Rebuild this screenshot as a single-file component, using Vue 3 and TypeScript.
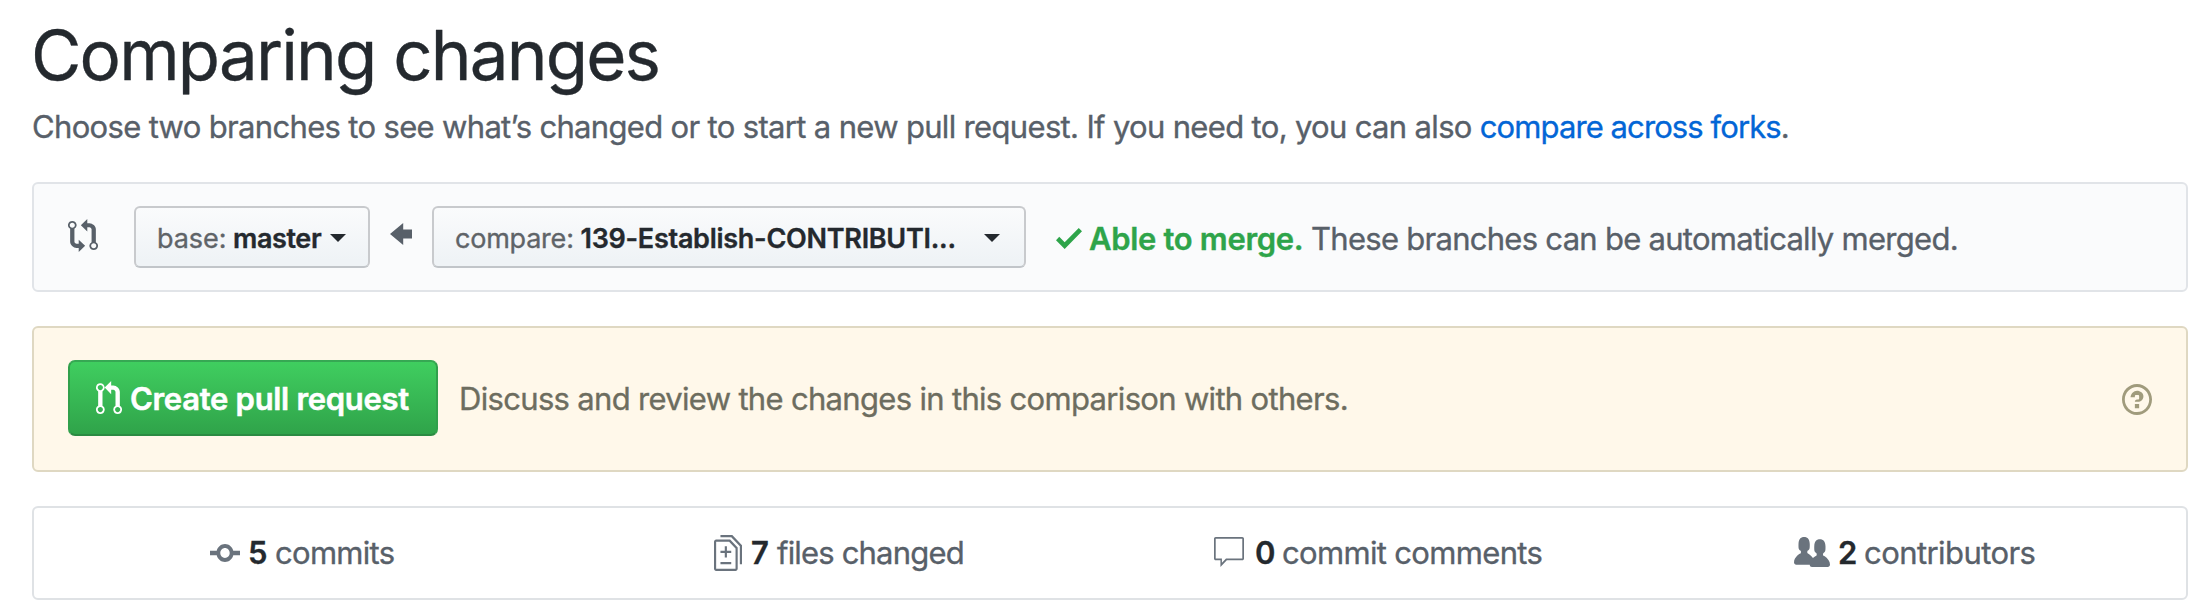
<script setup lang="ts">
interface Stat {
  key: string
  count: string
  label: string
  viewBox: string
  w: number
  h: number
  path: string
}

const prPath =
  'M11 11.28V5c-.03-.78-.34-1.47-.94-2.06C9.46 2.35 8.78 2.03 8 2H7V0L4 3l3 3V4h1c.27.02.48.11.69.31.21.2.3.42.31.69v6.28A1.993 1.993 0 0010 15a1.993 1.993 0 001-3.72zm-1 2.92c-.66 0-1.2-.55-1.2-1.2 0-.65.55-1.2 1.2-1.2.65 0 1.2.55 1.2 1.2 0 .65-.55 1.2-1.2 1.2zM4 3c0-1.11-.89-2-2-2a1.993 1.993 0 00-1 3.72v6.56A1.993 1.993 0 002 15a1.993 1.993 0 001-3.72V4.72c.59-.34 1-.98 1-1.72zm-.8 10c0 .66-.55 1.2-1.2 1.2-.65 0-1.2-.55-1.2-1.2 0-.65.55-1.2 1.2-1.2.65 0 1.2.55 1.2 1.2zM2 4.2C1.34 4.2.8 3.65.8 3c0-.65.55-1.2 1.2-1.2.65 0 1.2.55 1.2 1.2 0 .65-.55 1.2-1.2 1.2z'

const stats: Stat[] = [
  {
    key: 'commits', count: '5', label: 'commits', viewBox: '0 4 14 8', w: 30, h: 18,
    path: 'M10.86 7c-.45-1.72-2-3-3.86-3-1.86 0-3.41 1.28-3.86 3H0v2h3.14c.45 1.72 2 3 3.86 3 1.86 0 3.41-1.28 3.86-3H14V7h-3.14zM7 10.2c-1.22 0-2.2-.98-2.2-2.2 0-1.22.98-2.2 2.2-2.2 1.22 0 2.2.98 2.2 2.2 0 1.22-.98 2.2-2.2 2.2z',
  },
  {
    key: 'files', count: '7', label: 'files changed', viewBox: '0 0 13 16', w: 28, h: 36,
    path: 'M6 7h2v1H6v2H5V8H3V7h2V5h1v2zm-3 6h5v-1H3v1zM7.5 2L11 5.5V15c0 .55-.45 1-1 1H1c-.55 0-1-.45-1-1V3c0-.55.45-1 1-1h6.5zM10 6L7 3H1v12h9V6zM8.5 0H3v1h5l4 4v8h1V4.5L8.5 0z',
  },
  {
    key: 'comments', count: '0', label: 'commit comments', viewBox: '1 1 14 13.5', w: 30, h: 30,
    path: 'M14.2 1H1.8c-.44 0-.8.36-.8.8v8.9c0 .44.36.8.8.8H4v3l3-3h7.2c.44 0 .8-.36.8-.8V1.8c0-.44-.36-.8-.8-.8zm0 9.700H6.6l-1.9 1.9v-1.9H1.8V1.8h12.4v8.9z',
  },
  {
    key: 'contributors', count: '2', label: 'contributors', viewBox: '0 1 16 13', w: 36, h: 30,
    path: 'M16 12.999c0 .439-.45 1-1 1H7.995c-.539 0-.994-.447-.995-.999H1c-.54 0-1-.561-1-1 0-2.634 3-4 3-4s.229-.409 0-1c-.841-.621-1.058-.59-1-3 .058-2.419 1.367-3 2.5-3s2.442.58 2.5 3c.058 2.41-.159 2.379-1 3-.229.59 0 1 0 1s1.549.711 2.42 2.088C9.196 9.369 10 8.999 10 8.999s.229-.409 0-1c-.841-.62-1.058-.59-1-3 .058-2.419 1.367-3 2.5-3s2.437.581 2.495 3c.059 2.41-.158 2.38-1 3-.229.59 0 1 0 1s3.005 1.366 3.005 4z',
  },
]
</script>

<template>
  <main class="page">
    <h1 class="title">Comparing changes</h1>
    <p class="subtitle">Choose two branches to see what’s changed or to start a new pull request. If you need to, you can also <a class="link">compare across forks</a>.</p>

    <section class="range">
      <svg class="compare-icon" viewBox="0 0 14 16" preserveAspectRatio="none">
        <path fill-rule="evenodd" d="M5 12H4c-.27-.02-.48-.11-.69-.31-.21-.2-.3-.42-.31-.69V4.72A1.993 1.993 0 002 1a1.993 1.993 0 00-1 3.72V11c.03.78.34 1.47.94 2.06.6.59 1.28.91 2.06.94h1v2l3-3-3-3v2zM2 1.8c.66 0 1.2.55 1.2 1.2 0 .65-.55 1.2-1.2 1.2C1.35 4.2.8 3.65.8 3c0-.65.55-1.2 1.2-1.2zm11 9.48V5c-.03-.78-.34-1.47-.94-2.06-.6-.59-1.28-.91-2.06-.94H9V0L6 3l3 3V4h1c.27.02.48.11.69.31.21.2.3.42.31.69v6.28A1.993 1.993 0 0012 15a1.993 1.993 0 001-3.72zm-1 2.92c-.66 0-1.2-.55-1.2-1.2 0-.65.55-1.2 1.2-1.2.65 0 1.2.55 1.2 1.2 0 .65-.55 1.2-1.2 1.2z" />
      </svg>
      <button class="select base"><span class="key">base:</span><b class="branch">master</b><i class="caret"></i></button>
      <svg class="arrow-icon" viewBox="0 3 10 10" preserveAspectRatio="none"><path d="M6 3L0 8l6 5v-3h4V6H6V3z" /></svg>
      <button class="select head"><span class="key">compare:</span><b class="branch">139-Establish-CONTRIBUTI...</b><i class="caret"></i></button>
      <svg class="check-icon" viewBox="0 3.5 12 9.5" preserveAspectRatio="none"><path d="M12 5l-8 8-4-4 1.500-1.500L4 10l6.500-6.500L12 5z" /></svg>
      <strong class="able">Able to merge.</strong>
      <span class="detail">These branches can be automatically merged.</span>
    </section>

    <section class="prompt">
      <button class="create">
        <svg class="pr-icon" viewBox="0 0 12 15" preserveAspectRatio="none"><path fill-rule="evenodd" :d="prPath" /></svg>
        <span>Create pull request</span>
      </button>
      <span class="discuss">Discuss and review the changes in this comparison with others.</span>
      <svg class="help-icon" viewBox="0 1 14 14" preserveAspectRatio="none">
        <path fill-rule="evenodd" d="M6 10h2v2H6v-2zm4-3.5C10 8.64 8 9 8 9H6c0-.55.45-1 1-1h.5c.28 0 .5-.22.5-.5v-1c0-.28-.22-.5-.5-.5h-1c-.28 0-.5.22-.5.5V7H4c0-1.5 1.5-3 3-3s3 1 3 2.5zM7 2.3c3.14 0 5.7 2.56 5.7 5.7s-2.56 5.7-5.7 5.7A5.71 5.71 0 011.3 8c0-3.14 2.56-5.7 5.7-5.7zM7 1C3.14 1 0 4.14 0 8s3.14 7 7 7 7-3.14 7-7-3.14-7-7-7z" />
      </svg>
    </section>

    <section class="stats">
      <div v-for="s in stats" :key="s.key" class="cell">
        <div class="stat" :class="s.key">
          <span class="glyph">
            <svg :width="s.w" :height="s.h" :viewBox="s.viewBox" preserveAspectRatio="none"><path fill-rule="evenodd" :d="s.path" /></svg>
          </span>
          <b class="count">{{ s.count }}</b>
          <span class="label">{{ s.label }}</span>
        </div>
      </div>
    </section>
  </main>
</template>

<style>
body { margin: 0; background: #fff; }
</style>

<style scoped>
.page {
  box-sizing: border-box;
  width: 2202px;
  height: 616px;
  padding: 15px 14px 0 32px;
  overflow: hidden;
  font: 400 31px/40px Inter, "Liberation Sans", sans-serif;
  color: #586069;
  letter-spacing: -0.665px;
  white-space: nowrap;
  -webkit-text-stroke: 0.35px currentColor;
}
svg { display: block; fill: currentColor; flex: none; }
.title {
  margin: 0 0 0 -1px;
  height: 80px;
  font-size: 69px;
  font-weight: 400;
  line-height: 80px;
  letter-spacing: -1.8px;
  color: #24292e;
}
.subtitle { margin: 12px 0 35px; height: 40px; }
.link { color: #0366d6; letter-spacing: -0.91px; }
section {
  box-sizing: border-box;
  display: flex;
  align-items: center;
  width: 2156px;
  border: 2px solid #e1e4e8;
  border-radius: 6px;
}
.range { height: 110px; padding-left: 34px; background: #fafbfc; }
.compare-icon { width: 30px; height: 33px; margin-bottom: 4px; }
.select {
  box-sizing: border-box;
  display: flex;
  align-items: center;
  flex: none;
  height: 62px;
  padding: 3px 0 0 21px;
  border: 2px solid #c8cacd;
  border-bottom-color: #c1c5c9;
  border-radius: 6px;
  background: linear-gradient(#fafbfc, #eff3f6 90%);
  font: 400 27px/36px Inter, "Liberation Sans", sans-serif;
  color: #24292e;
}
.key { color: #5f6468; text-align: left; }
.branch { font-weight: 600; text-align: left; }
.caret {
  width: 0;
  height: 0;
  margin-bottom: 1px;
  border: 8px solid transparent;
  border-top-color: currentColor;
  border-bottom: 0;
}
.base { width: 236px; margin-left: 36px; }
.base .key { width: 76px; letter-spacing: -0.07px; }
.base .branch { width: 97px; letter-spacing: -0.4px; }
.arrow-icon { width: 22px; height: 22px; margin: 0 20px 6px; }
.head { width: 594px; }
.head .key { width: 125.5px; letter-spacing: -0.22px; }
.head .branch { width: 403.5px; letter-spacing: -0.27px; }
.check-icon { width: 26px; height: 21px; margin: 3px 7px 0 30px; color: #2ea44a; }
.able {
  width: 222px;
  margin-top: 3px;
  color: #2ea44a;
  font-weight: 600;
  letter-spacing: -0.33px;
}
.detail { margin-top: 3px; letter-spacing: -0.72px; }
.prompt { height: 146px; margin-top: 34px; padding: 0 34px; border-color: #dfd8c2; background: #fff8ea; }
.create {
  box-sizing: border-box;
  display: flex;
  align-items: center;
  width: 370px;
  height: 76px;
  margin-bottom: 2px;
  padding: 1px 0 0 26px;
  border: 2px solid;
  border-color: #36a853 #31a04c #2b8b42;
  border-radius: 7px;
  background: linear-gradient(#40cf60, #2fa249) border-box;
  font: 600 31px/40px Inter, "Liberation Sans", sans-serif;
  letter-spacing: -0.3px;
  color: #fff;
}
.create span { -webkit-text-stroke: 0.5px currentColor; }
.pr-icon { width: 26px; height: 33px; margin: 0 8px 3px 0; }
.discuss { margin-left: 21px; color: #6d6d5f; letter-spacing: -0.68px; }
.help-icon { width: 30px; height: 31px; margin: 1px 0 0 auto; color: #a09b7c; }
.stats { display: grid; grid-template-columns: repeat(4, 1fr); height: 94px; margin-top: 34px; border-color: #dfe2e5; }
.cell { display: flex; justify-content: center; }
.stat { display: flex; align-items: center; }
.glyph { flex: none; width: 38px; color: #6a737d; }
.count { width: 27px; font-weight: 600; color: #24292e; }
.commits { width: 186px; }
.commits .glyph { margin-bottom: 1px; }
.commits .label { letter-spacing: -0.7px; }
.files { width: 254px; }
.files .glyph { width: 37px; margin-bottom: 1px; }
.files .count { width: 26px; }
.files .label { letter-spacing: -0.82px; }
.comments { width: 330px; }
.comments .glyph { width: 41px; margin-bottom: 3px; }
.contributors { width: 246px; }
.contributors .glyph { width: 44px; margin-bottom: 3px; }
.contributors .count { width: 26px; }
.contributors .label { letter-spacing: -0.57px; }
</style>
